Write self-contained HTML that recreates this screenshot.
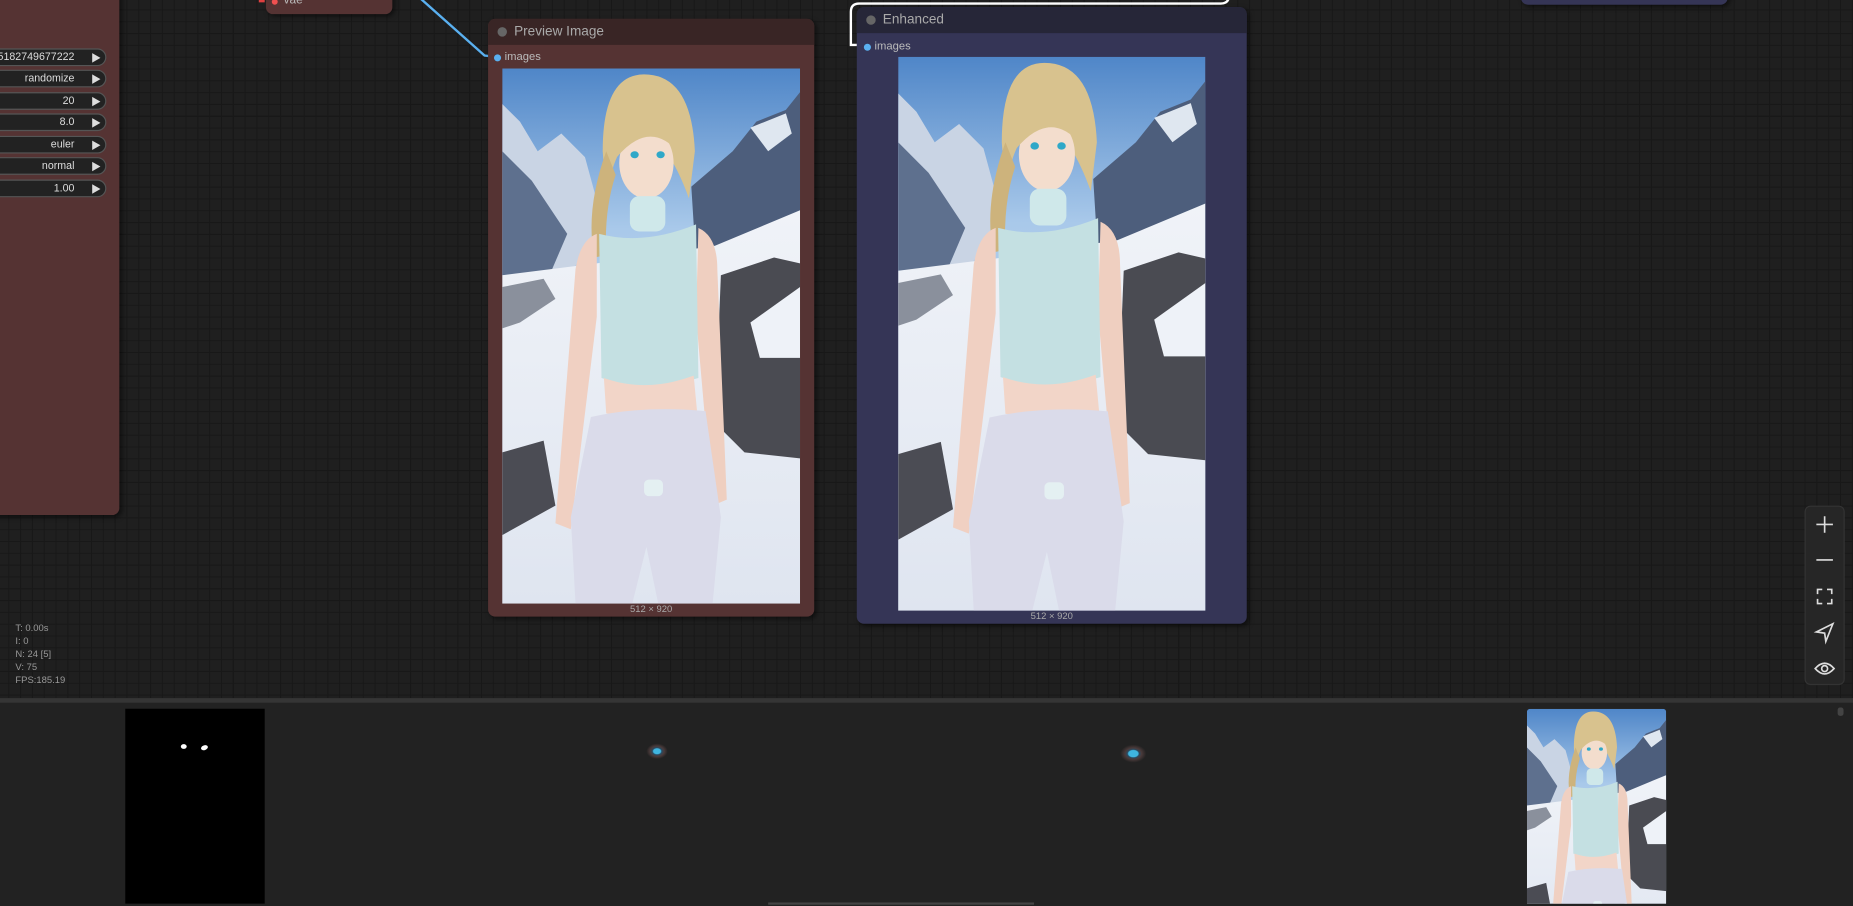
<!DOCTYPE html>
<html><head><meta charset="utf-8"><style>
html,body{margin:0;padding:0;width:1853px;height:906px;overflow:hidden;background:#222;}
#clip{position:absolute;left:0;top:0;width:1853px;height:906px;overflow:hidden}
#w{position:absolute;left:0;top:0;width:1568px;height:766px;overflow:hidden;transform:scale(1.18176,1.18123);transform-origin:0 0;font-family:"Liberation Sans",sans-serif;}
#canvas{position:absolute;left:0;top:0;width:1568px;height:591px;background-color:#1f1f1f;
background-image:linear-gradient(#181818 1px,transparent 1px),linear-gradient(90deg,#181818 1px,transparent 1px),linear-gradient(#161616 1px,transparent 1px),linear-gradient(90deg,#161616 1px,transparent 1px);
background-size:10px 10px,10px 10px,100px 100px,100px 100px;background-position:-3px -2px,-3px -2px,-3px -2px,-3px -2px;}
.abs{position:absolute}
.pill{position:absolute;left:-10px;width:98px;height:13px;background:#222;border:1px solid #555;border-radius:8px;color:#ddd;font-size:9px;line-height:13px;text-align:right;box-sizing:content-box}
.pill span{position:absolute;right:26px}
.pill i{position:absolute;right:4px;top:3px;width:0;height:0;border-left:7px solid #ddd;border-top:4px solid transparent;border-bottom:4px solid transparent}
.node{position:absolute;border-radius:6px;box-shadow:2px 2px 4px rgba(0,0,0,.5)}
.title{position:absolute;left:0;top:0;right:0;height:22px;border-radius:6px 6px 0 0;color:#aaa;font-size:11.5px;line-height:22px;padding-left:22px}
.title:before{content:"";position:absolute;left:8px;top:7px;width:8px;height:8px;border-radius:50%;background:#666}
.inp{position:absolute;font-size:9.5px;color:#bbb}
.inp:before{content:"";position:absolute;left:-9px;top:3px;width:6px;height:6px;border-radius:50%;background:#5ab0f0}
.cap{position:absolute;font-size:8px;color:#aaa;text-align:center;width:100%}
#stats{position:absolute;left:13px;top:526px;font-size:8px;line-height:11px;color:#999}
#tb{position:absolute;left:1527px;top:428px;width:34px;height:152px;background:#262626;border:1px solid #333;border-radius:5px;box-sizing:border-box}
#bar{position:absolute;left:0;top:591px;width:1568px;height:4px;background:#353535}
#panel{position:absolute;left:0;top:595px;width:1568px;height:172px;background:#222}
</style></head><body>
<svg width="0" height="0" style="position:absolute">
<defs>
<linearGradient id="sky" x1="0" y1="0" x2="0" y2="1"><stop offset="0" stop-color="#4f86c8"/><stop offset=".3" stop-color="#a9c9ea"/><stop offset="1" stop-color="#c8dcf0"/></linearGradient>
<linearGradient id="snow" x1="0" y1="0" x2="0" y2="1"><stop offset="0" stop-color="#f0f3f8"/><stop offset="1" stop-color="#dfe5f0"/></linearGradient>
<symbol id="girl" viewBox="0 0 252 453" preserveAspectRatio="none">
<rect width="252" height="453" fill="url(#sky)"/>
<polygon points="0,30 15,45 30,70 50,55 70,75 85,130 60,170 0,175" fill="#c9d4e4"/>
<polygon points="0,70 25,95 55,140 40,175 0,175" fill="#5e708e"/>
<polygon points="160,100 195,70 215,45 240,35 252,20 252,210 165,180" fill="#4d5e7c"/>
<polygon points="210,50 240,38 245,55 225,70" fill="#dfe7f0"/>
<polygon points="0,175 80,165 180,150 252,120 252,453 0,453" fill="url(#snow)"/>
<polygon points="185,175 230,160 252,165 252,330 205,325 180,300" fill="#4a4b52"/>
<polygon points="0,325 35,315 45,370 0,395" fill="#4b4c54"/>
<polygon points="0,185 35,178 45,195 15,215 0,220" fill="#8a909c"/>
<polygon points="210,215 252,185 252,245 218,245" fill="#eef2f8"/>
<path d="M85,70 Q85,5 120,5 Q160,5 163,70 L158,110 Q140,60 118,55 Q95,60 88,110Z" fill="#d8c28e"/>
<path d="M88,70 Q70,120 78,160 L88,158 Q86,120 96,90Z" fill="#cdb37c"/>
<ellipse cx="122" cy="80" rx="23" ry="30" fill="#f3ddcd"/>
<path d="M95,58 Q120,25 152,58 L150,72 Q125,42 97,75Z" fill="#d8c28e"/>
<ellipse cx="112" cy="73" rx="3.5" ry="3" fill="#2fa8c8"/><ellipse cx="134" cy="73" rx="3.5" ry="3" fill="#2fa8c8"/>
<path d="M80,140 Q66,145 62,170 L45,385 L58,390 L80,210Z" fill="#f0d0c2"/>
<path d="M166,135 Q182,142 182,170 L190,365 L178,370 L164,210Z" fill="#efcfc0"/>
<rect x="108" y="108" width="30" height="30" rx="8" fill="#cfe8ea"/>
<path d="M82,140 Q120,150 164,132 L166,262 Q122,275 84,262Z" fill="#c4e0e2"/>
<path d="M86,262 Q122,275 162,260 L165,292 Q122,300 88,292Z" fill="#f2d5c8"/>
<path d="M75,295 Q120,285 172,290 L185,380 L178,453 L132,453 L122,405 L110,453 L62,453 L58,380Z" fill="#dadbea"/>
<rect x="120" y="348" width="16" height="14" rx="4" fill="#e4f0f2"/>
</symbol>
</defs></svg>
<div id="clip"><div id="w">
<div id="canvas"></div>
<div class="node" style="left:-10px;top:-10px;width:111px;height:446px;background:#553333"></div>
<div class="pill" style="top:41px"><span>5182749677222</span><i></i></div>
<div class="pill" style="top:59px"><span>randomize</span><i></i></div>
<div class="pill" style="top:78px"><span>20</span><i></i></div>
<div class="pill" style="top:96px"><span>8.0</span><i></i></div>
<div class="pill" style="top:115px"><span>euler</span><i></i></div>
<div class="pill" style="top:133px"><span>normal</span><i></i></div>
<div class="pill" style="top:152px"><span>1.00</span><i></i></div>
<div class="node" style="left:225px;top:-10px;width:107px;height:22px;background:#553333"></div>
<div class="abs" style="left:219px;top:-2px;width:5px;height:4px;background:#e04040"></div>
<div class="abs" style="left:230px;top:-1px;width:5px;height:5px;border-radius:50%;background:#f05050"></div>
<div class="abs" style="left:240px;top:-5px;font-size:10px;color:#bbb">vae</div>
<svg class="abs" style="left:0;top:0" width="1568" height="60">
<path d="M355,-2 L410,47 L418,48" stroke="#5ab0f0" stroke-width="2" fill="none"/>
<path d="M1040,-4 Q1040,3 1033,3 L727,3 Q720,3 720,10 L720,38 L727,38" stroke="#fff" stroke-width="2" fill="none"/>
</svg>
<div class="node" style="left:413px;top:16px;width:276px;height:506px;background:#553333">
<div class="title" style="background:#392525">Preview Image</div>
<div class="inp" style="left:14px;top:27px">images</div>
<svg class="abs" style="left:12px;top:42px" width="252" height="453"><use href="#girl"/></svg>
<div class="cap" style="top:495px">512 × 920</div>
</div>
<div class="node" style="left:725px;top:6px;width:330px;height:522px;background:#353556">
<div class="title" style="background:#262638">Enhanced</div>
<div class="inp" style="left:15px;top:28px">images</div>
<svg class="abs" style="left:35px;top:42px" width="260" height="469"><use href="#girl"/></svg>
<div class="cap" style="top:511px">512 × 920</div>
</div>
<div class="node" style="left:1287px;top:-10px;width:175px;height:14px;background:#353556"></div>
<div id="stats">T: 0.00s<br>I: 0<br>N: 24 [5]<br>V: 75<br>FPS:185.19</div>
<div id="tb">
<svg width="34" height="152" style="position:absolute;left:-1px;top:-1px" stroke="#ddd" stroke-width="1.4" fill="none">
<path d="M17,9 V23 M10,16 H24"/>
<path d="M10,46 H24"/>
<path d="M11,75 V71 H15 M19,71 H23 V75 M23,79 V83 H19 M15,83 H11 V79"/>
<path d="M24,100 L10,107 L17,108 L18,115 Z"/>
<path d="M9,138 Q17,129 25,138 Q17,147 9,138Z"/><circle cx="17" cy="138" r="2.5"/>
</svg>
</div>
<div id="bar"></div>
<div id="panel">
<div class="abs" style="left:106px;top:5px;width:118px;height:165px;background:#000"></div>
<div class="abs" style="left:153px;top:35px;width:5px;height:4px;border-radius:50%;background:#fff"></div>
<div class="abs" style="left:170px;top:36px;width:6px;height:4px;border-radius:50%;background:#fff;transform:rotate(-20deg)"></div>
<div class="abs" style="left:545px;top:33px;width:22px;height:16px;border-radius:50%;background:radial-gradient(ellipse at 50% 50%,#3fb5e0 0 3px,#2a4a60 4px,#4a3a3a 6px,transparent 9px)"></div>
<div class="abs" style="left:946px;top:34px;width:26px;height:18px;border-radius:50%;background:radial-gradient(ellipse at 50% 50%,#3fb5e0 0 4px,#2a4a60 5px,#4a3a3a 7px,transparent 11px)"></div>
<div class="abs" style="left:1292px;top:5px;width:118px;height:165px;overflow:hidden;border-radius:3px 3px 0 0">
<svg width="118" height="212"><use href="#girl"/></svg></div>
<div class="abs" style="left:1555px;top:4px;width:5px;height:7px;border-radius:2px;background:#444"></div>
<div class="abs" style="left:650px;top:169px;width:225px;height:2px;background:#444"></div>
</div>
</div></div>
</body></html>
